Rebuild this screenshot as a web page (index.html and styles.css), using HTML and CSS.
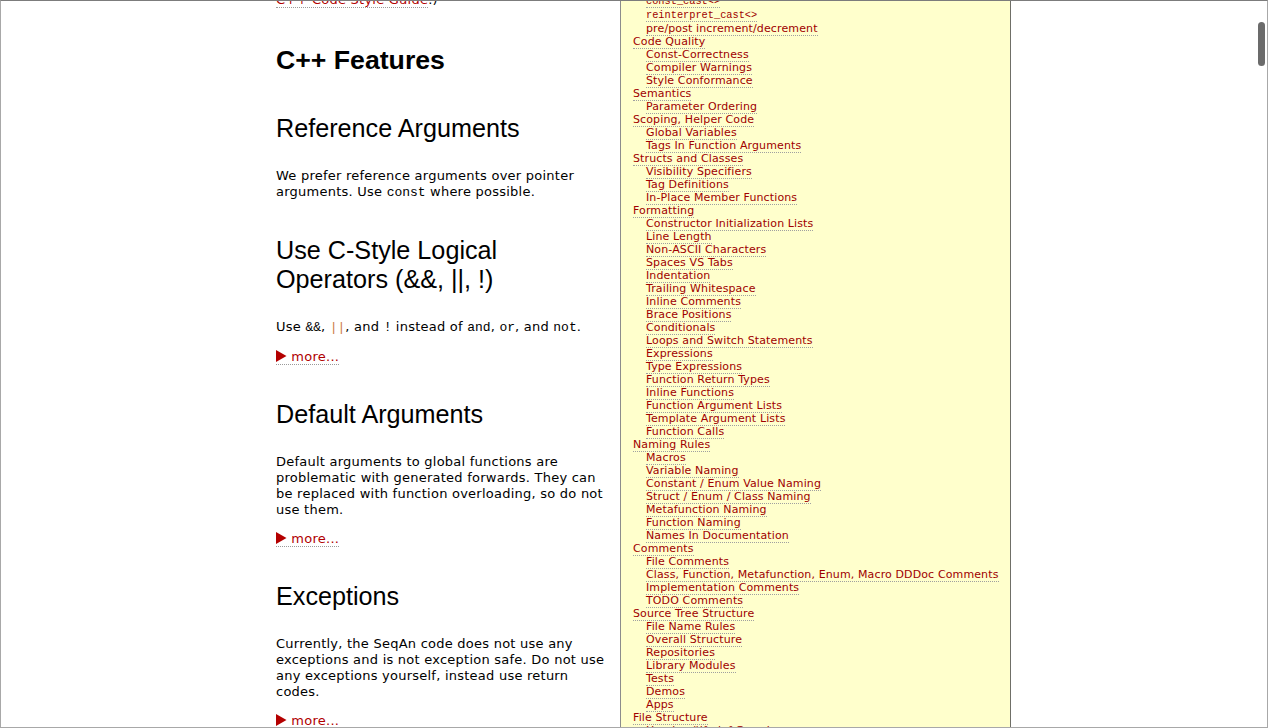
FILE: index.html
```html
<!DOCTYPE html>
<html>
<head>
<meta charset="utf-8">
<title>SeqAn Code Style</title>
<link rel="stylesheet" href="styles.css">
</head>
<body>
<div class="window">
  <div class="page">
    <div class="content">
      <p class="intro"><a href="#">C++ Code Style Guide</a>.)</p>

      <h2>C++ Features</h2>

      <h3>Reference Arguments</h3>
      <p>We prefer reference arguments over pointer arguments. Use <code>const</code> where possible.</p>

      <h3>Use C-Style Logical Operators (&amp;&amp;, ||, !)</h3>
      <p>Use <code>&amp;&amp;</code>, <code class="hl">||</code>, and <code>!</code> instead of <code>and</code>, <code>or</code>, and <code>not</code>.</p>
      <p class="more"><a href="#"><svg class="tri" width="11" height="12" viewBox="0 0 11 12"><path d="M0 0 L10.5 6 L0 12 Z" fill="#b40000"/></svg> more...</a></p>

      <h3>Default Arguments</h3>
      <p>Default arguments to global functions are problematic with generated forwards. They can be replaced with function overloading, so do not use them.</p>
      <p class="more"><a href="#"><svg class="tri" width="11" height="12" viewBox="0 0 11 12"><path d="M0 0 L10.5 6 L0 12 Z" fill="#b40000"/></svg> more...</a></p>

      <h3>Exceptions</h3>
      <p>Currently, the SeqAn code does not use any exceptions and is not exception safe. Do not use any exceptions yourself, instead use return codes.</p>
      <p class="more"><a href="#"><svg class="tri" width="11" height="12" viewBox="0 0 11 12"><path d="M0 0 L10.5 6 L0 12 Z" fill="#b40000"/></svg> more...</a></p>
    </div>

    <div class="toc">
      <ul class="sub first">
        <li><a href="#" class="mono">const_cast&lt;&gt;</a></li>
        <li><a href="#" class="mono">reinterpret_cast&lt;&gt;</a></li>
        <li><a href="#">pre/post increment/decrement</a></li>
      </ul>
      <ul class="top">
        <li><a href="#">Code Quality</a>
          <ul class="sub">
            <li><a href="#">Const-Correctness</a></li>
            <li><a href="#">Compiler Warnings</a></li>
            <li><a href="#">Style Conformance</a></li>
          </ul>
        </li>
        <li><a href="#">Semantics</a>
          <ul class="sub">
            <li><a href="#">Parameter Ordering</a></li>
          </ul>
        </li>
        <li><a href="#">Scoping, Helper Code</a>
          <ul class="sub">
            <li><a href="#">Global Variables</a></li>
            <li><a href="#">Tags In Function Arguments</a></li>
          </ul>
        </li>
        <li><a href="#">Structs and Classes</a>
          <ul class="sub">
            <li><a href="#">Visibility Specifiers</a></li>
            <li><a href="#">Tag Definitions</a></li>
            <li><a href="#">In-Place Member Functions</a></li>
          </ul>
        </li>
        <li><a href="#">Formatting</a>
          <ul class="sub">
            <li><a href="#">Constructor Initialization Lists</a></li>
            <li><a href="#">Line Length</a></li>
            <li><a href="#">Non-ASCII Characters</a></li>
            <li><a href="#">Spaces VS Tabs</a></li>
            <li><a href="#">Indentation</a></li>
            <li><a href="#">Trailing Whitespace</a></li>
            <li><a href="#">Inline Comments</a></li>
            <li><a href="#">Brace Positions</a></li>
            <li><a href="#">Conditionals</a></li>
            <li><a href="#">Loops and Switch Statements</a></li>
            <li><a href="#">Expressions</a></li>
            <li><a href="#">Type Expressions</a></li>
            <li><a href="#">Function Return Types</a></li>
            <li><a href="#">Inline Functions</a></li>
            <li><a href="#">Function Argument Lists</a></li>
            <li><a href="#">Template Argument Lists</a></li>
            <li><a href="#">Function Calls</a></li>
          </ul>
        </li>
        <li><a href="#">Naming Rules</a>
          <ul class="sub">
            <li><a href="#">Macros</a></li>
            <li><a href="#">Variable Naming</a></li>
            <li><a href="#">Constant / Enum Value Naming</a></li>
            <li><a href="#">Struct / Enum / Class Naming</a></li>
            <li><a href="#">Metafunction Naming</a></li>
            <li><a href="#">Function Naming</a></li>
            <li><a href="#">Names In Documentation</a></li>
          </ul>
        </li>
        <li><a href="#">Comments</a>
          <ul class="sub">
            <li><a href="#">File Comments</a></li>
            <li><a href="#">Class, Function, Metafunction, Enum, Macro DDDoc Comments</a></li>
            <li><a href="#">Implementation Comments</a></li>
            <li><a href="#">TODO Comments</a></li>
          </ul>
        </li>
        <li><a href="#">Source Tree Structure</a>
          <ul class="sub">
            <li><a href="#">File Name Rules</a></li>
            <li><a href="#">Overall Structure</a></li>
            <li><a href="#">Repositories</a></li>
            <li><a href="#">Library Modules</a></li>
            <li><a href="#">Tests</a></li>
            <li><a href="#">Demos</a></li>
            <li><a href="#">Apps</a></li>
          </ul>
        </li>
        <li><a href="#">File Structure</a>
          <ul class="sub">
            <li><a href="#">Header #ifndef Guards</a></li>
            <li><a href="#">File Headers</a></li>
          </ul>
        </li>
      </ul>
    </div>
  </div>
  <div class="scroll-thumb"></div>
</div>
</body>
</html>
```

FILE: styles.css
```css
html, body {
  margin: 0;
  padding: 0;
  background: #ffffff;
}

.window {
  position: relative;
  box-sizing: border-box;
  width: 1268px;
  height: 728px;
  overflow: hidden;
  border: 1px solid #a8a8a8;
  border-top-color: #7c7c7c;
  background: #ffffff;
}

.page {
  display: flex;
  flex-direction: row;
  align-items: stretch;
  margin-top: -11px;
  padding-left: 275px;
}

.content {
  width: 330px;
  flex: none;
  font-family: "DejaVu Sans", Verdana, sans-serif;
  font-size: 13px;
  line-height: 16px;
  letter-spacing: 0.24px;
  color: #000;
}

.content p {
  margin: 13px 0;
}

.content p.intro {
  margin: 2px 0 0;
}

.content a {
  color: #b00000;
  text-decoration: none;
  border-bottom: 1px dotted #9a9a9a;
}

.content h2 {
  font-family: "Liberation Sans", Arial, sans-serif;
  font-weight: bold;
  font-size: 26.67px;
  line-height: 32px;
  letter-spacing: 0;
  margin: 36px 0 38px;
}

.content h3 {
  font-family: "Liberation Sans", Arial, sans-serif;
  font-weight: normal;
  font-size: 25.2px;
  line-height: 29px;
  letter-spacing: 0;
  margin: 35px 0 25px;
}

code {
  font-family: "Liberation Mono", "Courier New", monospace;
  font-size: 13px;
  letter-spacing: 0;
}

code.hl {
  color: #cc7a3f;
}

.more {
  line-height: 16px;
}

.tri {
  vertical-align: -1px;
}

.toc {
  flex: none;
  width: 391px;
  box-sizing: border-box;
  margin-left: 14px;
  background: #ffffcc;
  border-left: 1px solid #8c8c8c;
  border-right: 1px solid #6f6f67;
  padding: 4px 0 0 12px;
  font-family: "DejaVu Sans", Verdana, sans-serif;
  font-size: 11px;
  line-height: 13px;
  letter-spacing: 0.12px;
}

.toc ul {
  list-style: none;
  margin: 0;
  padding: 0;
}

.toc ul.sub {
  padding-left: 13px;
}

.toc a {
  color: #a00000;
  text-decoration: none;
  border-bottom: 1px dotted #a0a0a0;
}

.toc a.mono {
  font-family: "Liberation Mono", "Courier New", monospace;
  font-size: 10.3px;
  letter-spacing: 0;
}

.scroll-thumb {
  position: absolute;
  top: 21px;
  right: 2px;
  width: 7px;
  height: 44px;
  border-radius: 4px;
  background: #6b6b6b;
}
```
